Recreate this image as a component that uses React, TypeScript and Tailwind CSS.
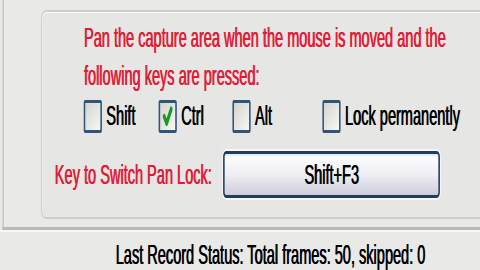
const red = "text-[#e21b36]";

function Box({ checked, label }: { checked?: boolean; label: string }) {
  return (
    <div className="flex items-center gap-[8px]">
      <div className="relative h-[33px] w-[35px] rounded-[3px] border-[3px] border-[#2f5579] bg-gradient-to-br from-[#d4d4d0] to-[#f7f7f4]">
        {checked && (
          <svg viewBox="0 0 20 20" className="absolute inset-0 h-full w-full">
            <path d="M5 10 L8.5 15 L15 4.5" fill="none" stroke="#1a9a20" strokeWidth="4" strokeLinecap="round" strokeLinejoin="round" />
          </svg>
        )}
      </div>
      <span className="whitespace-nowrap text-black">{label}</span>
    </div>
  );
}

export default function App() {
  return (
    <div className="h-[270px] w-[480px] overflow-hidden bg-[#e8e8e6] font-['Liberation_Sans',Arial,sans-serif] text-[28px] leading-[36px] [text-shadow:1px_0_0_currentColor]">
      <div className="flex h-[270px] w-[923px] origin-top-left scale-x-[0.52] flex-col">
        {/* outer frame */}
        <div className="ml-[5px] h-[230px] shrink-0 overflow-hidden border-b-[3px] border-l-[2px] border-[#b9b9b5] bg-[#e9e9e7] pl-[72px] pt-[10px]">
          {/* group box */}
          <div className="h-[209px] w-[880px] rounded-[9px] border-2 border-[#cdcdc9] bg-[#e6e6e4] pl-[80px] pt-[8px] shadow-[inset_1px_1px_0_#fbfbfb]">
            <p className={`whitespace-nowrap ${red}`}>Pan the capture area when the mouse is moved and the</p>
            <p className={`mt-[2px] whitespace-nowrap ${red}`}>following keys are pressed:</p>
            <div className="mt-[4px] flex items-center">
              <div className="w-[144px]">
                <Box label="Shift" />
              </div>
              <div className="w-[142px]">
                <Box checked label="Ctrl" />
              </div>
              <div className="w-[173px]">
                <Box label="Alt" />
              </div>
              <Box label="Lock permanently" />
            </div>
            <div className="-ml-[56px] mt-[17px] flex items-center gap-[22px]">
              <span className={`whitespace-nowrap ${red}`}>Key to Switch Pan Lock:</span>
              <div className="flex h-[47px] w-[417px] items-center justify-center rounded-[6px] border-[3px] border-[#223c5a] bg-gradient-to-b from-[#ffffff] via-[#eeeef4] to-[#cfcddc] text-black shadow-[inset_0_2px_0_#dff0fa,0_0_0_2px_#f4f6fa]">
                Shift+F3
              </div>
            </div>
          </div>
        </div>
        {/* status */}
        <div className="flex-1 border-t-2 border-[#f7f7f5] bg-[#e9e9e7] pl-[222px] pt-[9px] leading-[28px]">
          <span className="whitespace-nowrap text-black">Last Record Status: Total frames: 50, skipped: 0</span>
        </div>
      </div>
    </div>
  );
}
